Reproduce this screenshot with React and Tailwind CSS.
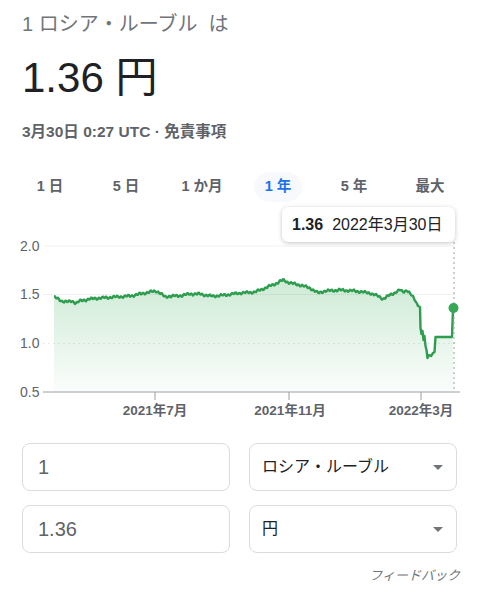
import React from 'react';

const FONT = { fontFamily: '"Liberation Sans", "Noto Sans CJK JP", sans-serif' };

const ranges = ['1 日', '5 日', '1 か月', '1 年', '5 年', '最大'];

// y pixel positions, chart area is drawn in page coordinates
const trend = [
  [54, 297], [58, 299], [62, 301], [68, 302], [72, 301], [76, 303], [80, 301],
  [90, 299], [100, 298], [115, 297], [130, 296], [140, 294], [150, 292], [156, 291],
  [160, 293], [165, 297], [170, 296], [178, 296], [190, 294], [200, 294], [210, 296],
  [215, 296], [225, 295], [240, 293], [255, 292], [265, 288], [275, 284], [283, 280],
  [290, 283], [300, 285], [310, 288], [318, 293], [325, 291], [340, 290], [355, 291],
  [370, 293], [380, 297], [383, 299], [390, 295], [400, 290], [403, 292], [407, 290],
  [412, 296], [415, 300], [418, 306],
];

const tail = [
  [420, 307], [420.5, 328], [421.5, 334], [422.5, 331], [423.5, 340], [424.5, 336],
  [425.5, 346], [426.5, 350], [427.5, 358], [429, 355], [431, 356], [433, 353],
  [434.5, 352], [435.5, 337], [452, 337], [453, 309],
];

function buildPoints() {
  const pts = [];
  for (let i = 0; i < trend.length - 1; i++) {
    const [x0, y0] = trend[i];
    const [x1, y1] = trend[i + 1];
    for (let x = x0; x < x1; x += 1) {
      const t = (x - x0) / (x1 - x0);
      const noise = Math.sin(x * 1.7) * 0.9 + Math.sin(x * 0.53) * 0.6;
      pts.push([x, y0 + (y1 - y0) * t + noise]);
    }
  }
  pts.push(trend[trend.length - 1]);
  return pts.concat(tail);
}

const points = buildPoints();
const line = points.map(([x, y], i) => `${i ? 'L' : 'M'}${x.toFixed(1)} ${y.toFixed(1)}`).join(' ');
const area = `${line} L453 392 L54 392 Z`;

function RateChart() {
  return (
    <div className="relative h-[220px]">
      <svg width="480" height="220" viewBox="0 205 480 220" className="block" style={FONT}>
        <defs>
          <linearGradient id="fill" x1="0" y1="280" x2="0" y2="392" gradientUnits="userSpaceOnUse">
            <stop offset="0" stopColor="#34a853" stopOpacity="0.24" />
            <stop offset="1" stopColor="#34a853" stopOpacity="0.02" />
          </linearGradient>
        </defs>

        {/* grid */}
        <line x1="43" y1="246" x2="455" y2="246" stroke="#f1f3f4" strokeWidth="1" />
        <line x1="43" y1="294.5" x2="455" y2="294.5" stroke="#eceff1" strokeWidth="1" />
        <line x1="43" y1="343.5" x2="455" y2="343.5" stroke="#e8eaed" strokeWidth="1" strokeDasharray="2 3" />

        <path d={area} fill="url(#fill)" />
        <path d={line} fill="none" stroke="#2e9d4e" strokeWidth="2.4" strokeLinejoin="round" />

        {/* axis */}
        <line x1="43" y1="392" x2="460" y2="392" stroke="#9aa0a6" strokeWidth="1" />
        {[155, 289, 421].map((x) => (
          <line key={x} x1={x} y1="392" x2={x} y2="400" stroke="#9aa0a6" strokeWidth="1" />
        ))}

        {/* cursor */}
        <line x1="454" y1="242" x2="454" y2="392" stroke="#9aa0a6" strokeWidth="1" strokeDasharray="2 3" />
        <circle cx="453.5" cy="308" r="5" fill="#34a853" />

        <g fill="#5f6368" fontSize="14">
          <text x="20" y="251">2.0</text>
          <text x="20" y="299">1.5</text>
          <text x="20" y="348">1.0</text>
          <text x="20" y="397">0.5</text>
        </g>
        <g fill="#5f6368" fontSize="13.5" fontWeight="600" textAnchor="middle">
          <text x="155" y="415">2021年7月</text>
          <text x="290" y="415">2021年11月</text>
          <text x="421" y="415">2022年3月</text>
        </g>
      </svg>

      <div className="absolute left-[282px] top-[2px] w-[173px] h-[35px] bg-white rounded-md shadow-[0_1px_4px_rgba(60,64,67,0.3)] flex items-center pl-[10px] text-[16px] text-[#202124]">
        <span className="font-bold">1.36</span>
        <span className="ml-[9px]">2022年3月30日</span>
      </div>
    </div>
  );
}

function AmountBox({ value }) {
  return (
    <div className="h-[48px] rounded-lg border border-[#dadce0] flex items-center px-[15px] text-[20px] text-[#5f6368]">
      {value}
    </div>
  );
}

function CurrencySelect({ label }) {
  return (
    <div className="h-[48px] rounded-lg border border-[#dadce0] flex items-center justify-between pl-[12px] pr-[13px] text-[16px] text-[#202124]">
      <span>{label}</span>
      <svg width="10" height="5" viewBox="0 0 10 5">
        <path d="M0 0 L10 0 L5 5 Z" fill="#70757a" />
      </svg>
    </div>
  );
}

export default function App() {
  return (
    <div className="w-[480px] h-[593px] bg-white overflow-hidden" style={FONT}>
      <div className="px-[22px] pt-[12px]">
        <div className="text-[20px] leading-[24px] text-[#70757a]">1 ロシア・ルーブル&nbsp; は</div>
        <div className="mt-[18px] text-[42px] leading-[48px] text-[#202124]">1.36 円</div>
        <div className="mt-[20px] text-[15.5px] leading-[20px] font-semibold text-[#5f6368]">
          3月30日 0:27 UTC · 免責事項
        </div>
      </div>

      <div className="mt-[27px] px-3 grid grid-cols-6 h-[36px]">
        {ranges.map((r) => (
          <div key={r} className="flex items-center justify-center">
            <span
              className={
                r === '1 年'
                  ? 'h-[30px] px-[11px] rounded-full bg-[#f7f9fc] flex items-center text-[14.5px] font-semibold text-[#1a73e8]'
                  : 'text-[14.5px] font-semibold text-[#5f6368]'
              }
            >
              {r}
            </span>
          </div>
        ))}
      </div>

      <RateChart />

      <div className="mt-[18px] pl-[22px] pr-[23px] grid grid-cols-2 gap-x-[19px] gap-y-[14px]">
        <AmountBox value="1" />
        <CurrencySelect label="ロシア・ルーブル" />
        <AmountBox value="1.36" />
        <CurrencySelect label="円" />
      </div>

      <div className="mt-[15px] pr-[20px] text-right text-[13px] leading-[16px] italic text-[#70757a]">
        フィードバック
      </div>
    </div>
  );
}
